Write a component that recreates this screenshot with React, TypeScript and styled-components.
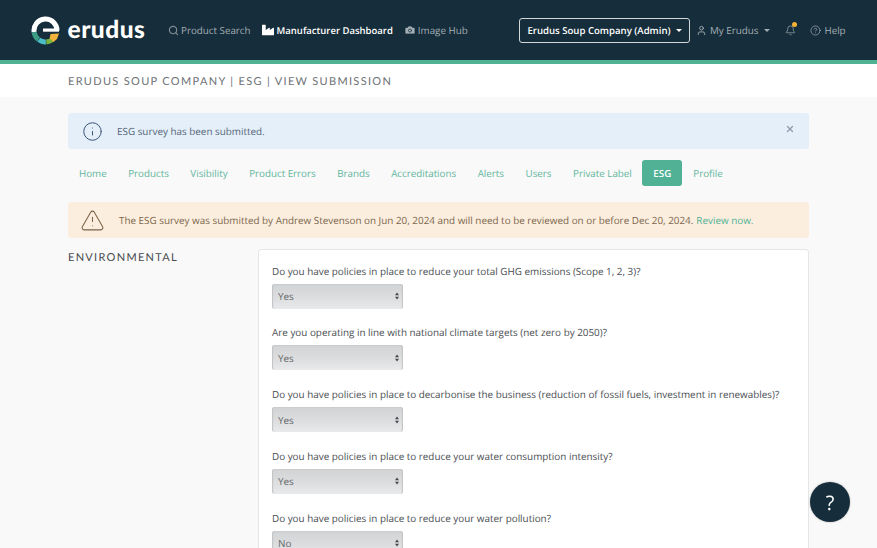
import React from "react";
import styled, { createGlobalStyle } from "styled-components";
import { Search, Camera, User, Bell, CircleHelp, Info, TriangleAlert, X } from "lucide-react";
import { FaIndustry } from "react-icons/fa";

const Global = createGlobalStyle`
  html, body { margin: 0; padding: 0; height: 548px; overflow: hidden; background: #f9f9f9; }
  body { font-family: "Open Sans", "Liberation Sans", sans-serif; text-rendering: geometricPrecision; }
  #root { height: 548px; overflow: hidden; }
`;

const Header = styled.header`
  height: 60px;
  background: #162d3b;
  border-bottom: 4px solid #50b195;
  display: flex;
  align-items: center;
  color: #a3aeb4;
  font-size: 9.8px;
`;
const Brand = styled.div`
  display: flex;
  align-items: center;
  gap: 7.5px;
  margin-left: 31px;
  width: 137px;
  flex: none;
`;
const BrandName = styled.span`
  font-family: Lato, sans-serif;
  font-weight: 900;
  font-size: 24.5px;
  letter-spacing: 0.5px;
  color: #fff;
  line-height: 28px;
`;
const MainNav = styled.nav`
  display: flex;
  align-items: center;
  gap: 11px;
  width: 351px;
  flex: none;
`;
const NavLink = styled.span<{ $active?: boolean; $gap?: number }>`
  display: inline-flex;
  align-items: center;
  gap: ${(p) => p.$gap ?? 3}px;
  white-space: nowrap;
  color: ${(p) => (p.$active ? "#fff" : "#a3aeb4")};
  font-weight: ${(p) => (p.$active ? 600 : 400)};
  font-size: ${(p) => (p.$active ? 9.5 : 9.8)}px;
`;
const CompanyButton = styled.div`
  width: 171px;
  height: 25px;
  box-sizing: border-box;
  border: 1px solid #d3d7da;
  border-radius: 3px;
  display: flex;
  align-items: center;
  justify-content: center;
  gap: 5px;
  color: #fff;
  font-size: 9.6px;
  font-weight: 600;
  white-space: nowrap;
  flex: none;
`;
const Caret = styled.i<{ $color?: string; $left?: number }>`
  width: 0;
  height: 0;
  margin-left: ${(p) => p.$left || 0}px;
  border-left: 3px solid transparent;
  border-right: 3px solid transparent;
  border-top: 3px solid ${(p) => p.$color || "#fff"};
`;
const UserNav = styled.div`
  display: flex;
  align-items: center;
  margin-left: 6px;
`;
const BellWrap = styled.span`
  position: relative;
  display: inline-flex;
  margin: 0 14px 0 15px;
`;
const BellDot = styled.i`
  position: absolute;
  top: -3px;
  right: -1px;
  width: 5px;
  height: 5px;
  border-radius: 50%;
  background: #f5b335;
`;

const TitleBand = styled.div`
  height: 33px;
  box-sizing: border-box;
  padding: 1px 0 0 68px;
  background: #fff;
  display: flex;
  align-items: center;
`;
const PageTitle = styled.h1`
  margin: 0;
  font-family: Lato, sans-serif;
  font-weight: 400;
  font-size: 11px;
  letter-spacing: 1.32px;
  color: #6e7276;
  text-transform: uppercase;
  white-space: nowrap;
`;

const Container = styled.main`
  width: 741px;
  margin-left: 68px;
  padding-top: 16px;
`;
const Alert = styled.div<{ $bg: string; $fg: string }>`
  position: relative;
  height: 36px;
  border-radius: 3px;
  background: ${(p) => p.$bg};
  color: ${(p) => p.$fg};
  display: flex;
  align-items: center;
  font-size: 9.9px;
  white-space: nowrap;
`;
const AlertIcon = styled.span<{ $w: number; $after?: number }>`
  display: inline-flex;
  justify-content: center;
  width: ${(p) => p.$w}px;
  margin-right: ${(p) => p.$after || 0}px;
  flex: none;
`;
const CloseIcon = styled.span`
  position: absolute;
  right: 14px;
  top: 11px;
  display: inline-flex;
  color: #8e9bab;
`;
const ReviewLink = styled.span`
  color: #50b195;
  margin-left: 3px;
`;
const Tabs = styled.nav`
  display: flex;
  align-items: center;
  margin: 11px 0 16px;
  height: 26px;
  font-size: 9.8px;
`;
const Tab = styled.span<{ $active?: boolean; $gap: number }>`
  padding: 0 ${(p) => (p.$active ? 11 : 0)}px;
  margin-left: ${(p) => p.$gap}px;
  height: 26px;
  line-height: 27px;
  border-radius: 3px;
  white-space: nowrap;
  color: ${(p) => (p.$active ? "#fff" : "#62b69d")};
  font-weight: ${(p) => (p.$active ? 600 : 400)};
  background: ${(p) => (p.$active ? "#50b195" : "transparent")};
`;

const Section = styled.section`
  display: flex;
  margin-top: 11px;
`;
const SectionLabel = styled.h2`
  width: 190px;
  flex: none;
  margin: 0;
  padding-top: 0.5px;
  font-family: Lato, sans-serif;
  font-weight: 400;
  font-size: 11px;
  line-height: 15px;
  letter-spacing: 1.3px;
  color: #484b4e;
`;
const Card = styled.div`
  flex: 1;
  box-sizing: border-box;
  height: 400px;
  background: #fff;
  border: 1px solid #e6e6e6;
  border-radius: 3px;
  padding: 13.5px 13px;
  display: flex;
  flex-direction: column;
  gap: 16.75px;
`;
const Question = styled.div`
  display: flex;
  flex-direction: column;
  gap: 5px;
`;
const QuestionText = styled.label`
  font-size: 9.9px;
  line-height: 15px;
  color: #4a4e52;
  white-space: nowrap;
`;
const FakeSelect = styled.div`
  position: relative;
  width: 131px;
  height: 25px;
  box-sizing: border-box;
  border-radius: 3px;
  padding-left: 6px;
  display: flex;
  align-items: center;
  font-size: 9.9px;
  color: #636669;
  background: linear-gradient(to bottom, #d2d3d5 0%, #dcdddf 55%, #e9eaeb 100%);
  box-shadow: inset 2px 0 1px -1px #c0c2c4, inset -2px 0 1px -1px #c0c2c4, inset 0 1px 1px #cacbcd;
`;
const Arrows = styled.svg`
  position: absolute;
  right: 4.5px;
  top: 8.5px;
`;
const HelpBubble = styled.div`
  position: fixed;
  right: 27px;
  bottom: 26px;
  width: 40px;
  height: 40px;
  border-radius: 50%;
  background: #162d3b;
  color: #fff;
  font-size: 20px;
  display: flex;
  align-items: center;
  justify-content: center;
  box-shadow: 0 0 2px rgba(0, 0, 0, 0.3);
`;

const polar = (r: number, deg: number) => {
  const a = (deg * Math.PI) / 180;
  return `${(14.5 + r * Math.cos(a)).toFixed(2)} ${(14.5 + r * Math.sin(a)).toFixed(2)}`;
};
const arc = (from: number, to: number, r = 11.5) => `M${polar(r, from)} A${r} ${r} 0 ${to - from > 180 ? 1 : 0} 1 ${polar(r, to)}`;

const Logo = () => (
  <svg width="29" height="29" viewBox="0 0 29 29" fill="none">
    <path d={arc(172, 360)} stroke="#fff" strokeWidth="5" />
    <path d="M12 12.5h16v3.2H12z" fill="#fff" />
    <path d={arc(128, 172)} stroke="#3d9c86" strokeWidth="5" />
    <path d={arc(88, 126)} stroke="#4cbcc6" strokeWidth="5" />
    <path d={arc(54, 86)} stroke="#79b43e" strokeWidth="5" />
    <path d="M19.5 18 L28 17.5 L26 23 L22.5 26 L18.7 22.5 Z" fill="#f3b23a" />
  </svg>
);

const questions = [
  ["Do you have policies in place to reduce your total GHG emissions (Scope 1, 2, 3)?", "Yes"],
  ["Are you operating in line with national climate targets (net zero by 2050)?", "Yes"],
  ["Do you have policies in place to decarbonise the business (reduction of fossil fuels, investment in renewables)?", "Yes"],
  ["Do you have policies in place to reduce your water consumption intensity?", "Yes"],
  ["Do you have policies in place to reduce your water pollution?", "No"],
];
const tabs: [string, number][] = [
  ["Home", 11], ["Products", 21.5], ["Visibility", 21.5], ["Product Errors", 21.5], ["Brands", 21.5],
  ["Accreditations", 21.5], ["Alerts", 21.5], ["Users", 21.5], ["Private Label", 21.5], ["ESG", 10.5], ["Profile", 11],
];

export default function App() {
  return (
    <>
      <Global />
      <Header>
        <Brand>
          <Logo />
          <BrandName>erudus</BrandName>
        </Brand>
        <MainNav>
          <NavLink $gap={2}><Search size={11} color="#7f8d95" strokeWidth={2.5} />Product Search</NavLink>
          <NavLink $active><FaIndustry size={12} />Manufacturer Dashboard</NavLink>
          <NavLink $gap={2}><Camera size={12} fill="#a3aeb4" color="#162d3b" strokeWidth={1.5} />Image Hub</NavLink>
        </MainNav>
        <CompanyButton>Erudus Soup Company (Admin)<Caret /></CompanyButton>
        <UserNav>
          <NavLink><User size={11} />My Erudus<Caret $color="#a3aeb4" $left={3} /></NavLink>
          <BellWrap><Bell size={11} strokeWidth={1.5} /><BellDot /></BellWrap>
          <NavLink><CircleHelp size={11} strokeWidth={1.5} />Help</NavLink>
        </UserNav>
      </Header>
      <TitleBand>
        <PageTitle>Erudus Soup Company | ESG | View Submission</PageTitle>
      </TitleBand>
      <Container>
        <Alert $bg="#e4eff9" $fg="#566578">
          <AlertIcon $w={49}><Info size={21} color="#36506f" strokeWidth={1.1} /></AlertIcon>
          ESG survey has been submitted.
          <CloseIcon><X size={10} strokeWidth={3} /></CloseIcon>
        </Alert>
        <Tabs>
          {tabs.map(([t, g]) => (
            <Tab key={t} $gap={g} $active={t === "ESG"}>{t}</Tab>
          ))}
        </Tabs>
        <Alert $bg="#fbeede" $fg="#7b664d">
          <AlertIcon $w={49} $after={2}><TriangleAlert size={25} color="#7a6248" strokeWidth={1} /></AlertIcon>
          The ESG survey was submitted by Andrew Stevenson on Jun 20, 2024 and will need to be reviewed on or before Dec 20, 2024.
          <ReviewLink>Review now.</ReviewLink>
        </Alert>
        <Section>
          <SectionLabel>ENVIRONMENTAL</SectionLabel>
          <Card>
            {questions.map(([q, a]) => (
              <Question key={q}>
                <QuestionText>{q}</QuestionText>
                <FakeSelect>
                  {a}
                  <Arrows width="4" height="8" viewBox="0 0 5 9">
                    <path d="M2.5 0 L5 3.5 H0 Z M2.5 9 L5 5.5 H0 Z" fill="#45484c" />
                  </Arrows>
                </FakeSelect>
              </Question>
            ))}
          </Card>
        </Section>
      </Container>
      <HelpBubble>?</HelpBubble>
    </>
  );
}
